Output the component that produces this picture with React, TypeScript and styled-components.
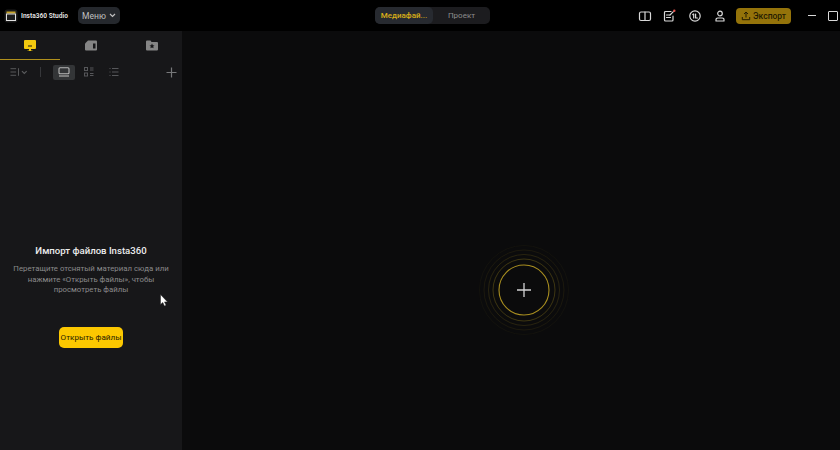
import React from "react";
import styled, { createGlobalStyle } from "styled-components";

const GlobalStyle = createGlobalStyle`
    html, body {
        margin: 0;
        padding: 0;
        background: #0b0b0c;
    }
    #root {
        width: 840px;
        height: 450px;
        overflow: hidden;
    }
`;

const Page = styled.div`
    position: relative;
    width: 840px;
    height: 450px;
    display: flex;
    flex-direction: column;
    overflow: hidden;
    font-family: Roboto, "Noto Sans", sans-serif;
    background: #0b0b0c;
`;

const TitleBar = styled.header`
    height: 31px;
    flex-shrink: 0;
    background: #000;
    display: grid;
    grid-template-columns: 375px auto 1fr;
    align-items: center;
`;

const TitleLeft = styled.div`
    display: flex;
    align-items: center;
    padding-left: 4px;
`;

const AppName = styled.span`
    width: 47px;
    margin-left: 3px;
    font-size: 6.6px;
    font-weight: 700;
    color: #dedede;
    white-space: nowrap;
`;

const MenuButton = styled.div`
    margin-left: 10px;
    width: 42px;
    height: 17px;
    border-radius: 5px;
    background: #25282d;
    color: #c0c0c0;
    font-size: 8.5px;
    display: flex;
    align-items: center;
    justify-content: center;
    gap: 3px;
`;

const ModeSwitch = styled.div`
    width: 115px;
    height: 17px;
    border-radius: 5px;
    background: #1c1c1f;
    display: flex;
`;

const ModeTab = styled.div<{ $active?: boolean }>`
    width: ${({ $active }) => ($active ? "58px" : "57px")};
    border-radius: 5px;
    background: ${({ $active }) => ($active ? "#272a30" : "transparent")};
    color: ${({ $active }) => ($active ? "#d9ae18" : "#8d8d8d")};
    font-size: 8px;
    font-weight: ${({ $active }) => ($active ? 500 : 400)};
    display: flex;
    align-items: center;
    justify-content: center;
`;

const TitleRight = styled.div`
    display: flex;
    align-items: center;
    justify-content: flex-end;
`;

const ToolIcon = styled.div<{ $gap: number }>`
    width: 14px;
    height: 14px;
    margin-right: ${({ $gap }) => $gap}px;
    display: flex;
    color: #d8d8d8;
`;

const ExportButton = styled.div`
    width: 55px;
    height: 16px;
    margin-right: 17px;
    border-radius: 4px;
    background: #94730a;
    color: #241c02;
    font-size: 8.5px;
    font-weight: 500;
    display: flex;
    align-items: center;
    justify-content: center;
    gap: 2px;
`;

const WindowButtons = styled.div`
    width: 32px;
    display: flex;
    align-items: center;
    gap: 12px;
`;

const MinimizeLine = styled.span`
    width: 8px;
    height: 1px;
    background: #d8d8d8;
`;

const MaximizeBox = styled.span`
    width: 8px;
    height: 8px;
    border: 1px solid #d8d8d8;
    border-radius: 1px;
`;

const Body = styled.div`
    flex: 1;
    display: flex;
    min-height: 0;
`;

const Sidebar = styled.aside`
    width: 182px;
    flex-shrink: 0;
    background: #171719;
    display: flex;
    flex-direction: column;
`;

const SideTabs = styled.nav`
    height: 29px;
    display: grid;
    grid-template-columns: 60px 61px 61px;
`;

const SideTab = styled.div<{ $active?: boolean }>`
    display: flex;
    align-items: center;
    justify-content: center;
    border-bottom: 1px solid ${({ $active }) => ($active ? "#b0901c" : "transparent")};
    color: ${({ $active }) => ($active ? "#f2c90f" : "#858585")};
`;

const ViewBar = styled.div`
    height: 24px;
    padding: 0 5px 0 10px;
    display: flex;
    align-items: center;
    color: #5b5c5e;
`;

const SortControl = styled.div`
    width: 18px;
    display: flex;
    align-items: center;
    gap: 1px;
`;

const ViewDivider = styled.span`
    width: 1px;
    height: 10px;
    margin: 0 12px 0 12px;
    background: #36373a;
`;

const ViewOption = styled.div<{ $active?: boolean }>`
    width: 22px;
    height: 15px;
    margin-right: 3px;
    border-radius: 2px;
    background: ${({ $active }) => ($active ? "#333537" : "transparent")};
    color: ${({ $active }) => ($active ? "#b9b9b9" : "#56575a")};
    display: flex;
    align-items: center;
    justify-content: center;
`;

const AddClip = styled.div`
    margin-left: auto;
    display: flex;
    color: #77787a;
`;

const EmptyState = styled.section`
    flex: 1;
    padding: 160px 10px 0;
    display: flex;
    flex-direction: column;
    align-items: center;
    text-align: center;
`;

const EmptyTitle = styled.h2`
    margin: 0;
    font-size: 9.6px;
    line-height: 14px;
    font-weight: 500;
    color: #ededed;
`;

const EmptyText = styled.p`
    margin: 6px 0 0;
    font-size: 7.8px;
    line-height: 10.6px;
    color: #8a8a8b;
    white-space: nowrap;
`;

const OpenButton = styled.div`
    margin-top: 31px;
    width: 64px;
    height: 21px;
    border-radius: 5px;
    background: #fcc800;
    color: #2a2200;
    font-size: 8.1px;
    white-space: nowrap;
    display: flex;
    align-items: center;
    justify-content: center;
`;

const Workspace = styled.main`
    flex: 1;
    background: #0b0b0c;
    padding: 214px 0 0 297px;
`;

const Target = styled.div`
    width: 90px;
    height: 90px;
    color: #d4d4d4;
`;

const Cursor = styled.svg`
    position: absolute;
    left: 160px;
    top: 294px;
`;

const ICON = {
    fill: "none",
    stroke: "currentColor",
    strokeWidth: 1.2,
    strokeLinecap: "round" as const,
    strokeLinejoin: "round" as const,
};

const Logo = () => (
    <svg width="14" height="14" viewBox="0 0 14 14">
        <rect x="0.5" y="0.5" width="13" height="13" rx="3" fill="#1d1d1d" />
        <rect x="2.5" y="2.5" width="9" height="2" fill="#c8a52a" />
        <rect x="2.5" y="5" width="9" height="6.5" fill="none" stroke="#e0e0e0" />
    </svg>
);

const BookIcon = () => (
    <svg width="14" height="14" viewBox="0 0 14 14" {...ICON}>
        <rect x="1.5" y="3" width="11" height="8.5" rx="1.5" />
        <path d="M7 3v8.5" />
    </svg>
);

const NotesIcon = () => (
    <svg width="14" height="14" viewBox="0 0 14 14" {...ICON} style={{ overflow: "visible" }}>
        <path d="M9 2.5H3.5a1 1 0 0 0-1 1v7.5a1 1 0 0 0 1 1H10a1 1 0 0 0 1-1V7" />
        <path d="M4.5 6h3M4.5 8.5h4" />
        <path d="M8 6l3.4-3.4" />
        <circle cx="12.3" cy="1.8" r="1.2" fill="#e5504c" stroke="none" />
    </svg>
);

const BadgeIcon = () => (
    <svg width="14" height="14" viewBox="0 0 14 14" {...ICON}>
        <circle cx="7" cy="7" r="5.2" />
        <path d="M4.8 5.6l.9-.6v4" />
        <path d="M7.6 5v4h1.8" />
    </svg>
);

const UserIcon = () => (
    <svg width="14" height="14" viewBox="0 0 14 14" {...ICON}>
        <circle cx="7" cy="4.5" r="2.3" />
        <path d="M3 12v-1.3a1.7 1.7 0 0 1 1.7-1.7h4.6a1.7 1.7 0 0 1 1.7 1.7V12z" />
    </svg>
);

const UploadIcon = () => (
    <svg width="10" height="10" viewBox="0 0 10 10" fill="none" stroke="#241c02" strokeWidth="1">
        <path d="M5 6.5V1.2M3 3l2-2 2 2M1.3 6v2.7h7.4V6" />
    </svg>
);

const Chevron = () => (
    <svg width="7" height="5" viewBox="0 0 7 5" fill="none" stroke="currentColor" strokeWidth="1.2">
        <path d="M1 1l2.5 2.5L6 1" />
    </svg>
);

const MonitorIcon = () => (
    <svg width="14" height="13" viewBox="0 0 14 13" fill="currentColor">
        <path d="M2 1h10a1 1 0 0 1 1 1v7a1 1 0 0 1-1 1H8v1.5h1.5V12h-5v-.5H6V10H2a1 1 0 0 1-1-1V2a1 1 0 0 1 1-1z" />
        <rect x="5" y="6.5" width="4" height="1" fill="#171719" />
    </svg>
);

const CardIcon = () => (
    <svg width="14" height="13" viewBox="0 0 14 13" fill="currentColor">
        <path d="M4 1.5h8a1 1 0 0 1 1 1v8a1 1 0 0 1-1 1H2a1 1 0 0 1-1-1V4.5z" />
        <rect x="9" y="4.5" width="2.5" height="5" fill="#171719" />
    </svg>
);

const StarFolderIcon = () => (
    <svg width="14" height="13" viewBox="0 0 14 13" fill="currentColor">
        <path d="M1 2.5a1 1 0 0 1 1-1h3.5l1 1.5H12a1 1 0 0 1 1 1v6.5a1 1 0 0 1-1 1H2a1 1 0 0 1-1-1z" />
        <path
            d="M7 4.6l.8 1.6 1.7.2-1.3 1.2.4 1.7L7 8.4l-1.6.9.4-1.7-1.3-1.2 1.7-.2z"
            fill="#171719"
        />
    </svg>
);

const SortIcon = () => (
    <svg width="11" height="10" viewBox="0 0 11 10" fill="none" stroke="currentColor" strokeWidth="1">
        <path d="M0.5 1.5h6M0.5 5h6M0.5 8.5h6M9 1v8" />
    </svg>
);

const FilmstripIcon = () => (
    <svg width="12" height="10" viewBox="0 0 12 10" fill="none" stroke="currentColor" strokeWidth="1.1">
        <rect x="1" y="0.8" width="10" height="6" rx="1" />
        <path d="M1 9h10" />
    </svg>
);

const GridIcon = () => (
    <svg width="10" height="10" viewBox="0 0 10 10" fill="none" stroke="currentColor" strokeWidth="1">
        <rect x="0.5" y="0.5" width="3" height="3" />
        <rect x="0.5" y="6" width="3" height="3" />
        <path d="M6 1h3.5M6 3h3.5M6 6.5h3.5M6 8.5h3.5" />
    </svg>
);

const ListIcon = () => (
    <svg width="10" height="10" viewBox="0 0 10 10" fill="none" stroke="currentColor" strokeWidth="1">
        <path d="M0.5 1.5h1M3 1.5h6.5M0.5 5h1M3 5h6.5M0.5 8.5h1M3 8.5h6.5" />
    </svg>
);

const PlusIcon = () => (
    <svg width="11" height="11" viewBox="0 0 11 11" fill="none" stroke="currentColor" strokeWidth="1.2">
        <path d="M5.5 0.5v10M0.5 5.5h10" />
    </svg>
);

const RINGS = [
    { r: 44.5, opacity: 0.05 },
    { r: 40, opacity: 0.1 },
    { r: 35.5, opacity: 0.18 },
    { r: 31, opacity: 0.3 },
];

const ImportTarget = () => (
    <svg width="90" height="90" viewBox="0 0 90 90" fill="none">
        {RINGS.map(({ r, opacity }) => (
            <circle key={r} cx="45" cy="45" r={r} stroke="#b4981f" strokeOpacity={opacity} />
        ))}
        <circle cx="45" cy="45" r="25" stroke="#a88e20" strokeWidth="1.1" />
        <path d="M45 38v14M38 45h14" stroke="currentColor" strokeWidth="1.3" />
    </svg>
);

export default function App() {
    return (
        <Page>
            <GlobalStyle />
            <TitleBar>
                <TitleLeft>
                    <Logo />
                    <AppName>Insta360 Studio</AppName>
                    <MenuButton>
                        Меню
                        <Chevron />
                    </MenuButton>
                </TitleLeft>
                <ModeSwitch>
                    <ModeTab $active>Медиафай...</ModeTab>
                    <ModeTab>Проект</ModeTab>
                </ModeSwitch>
                <TitleRight>
                    <ToolIcon $gap={10}>
                        <BookIcon />
                    </ToolIcon>
                    <ToolIcon $gap={12}>
                        <NotesIcon />
                    </ToolIcon>
                    <ToolIcon $gap={11}>
                        <BadgeIcon />
                    </ToolIcon>
                    <ToolIcon $gap={9}>
                        <UserIcon />
                    </ToolIcon>
                    <ExportButton>
                        <UploadIcon />
                        Экспорт
                    </ExportButton>
                    <WindowButtons>
                        <MinimizeLine />
                        <MaximizeBox />
                    </WindowButtons>
                </TitleRight>
            </TitleBar>
            <Body>
                <Sidebar>
                    <SideTabs>
                        <SideTab $active>
                            <MonitorIcon />
                        </SideTab>
                        <SideTab>
                            <CardIcon />
                        </SideTab>
                        <SideTab>
                            <StarFolderIcon />
                        </SideTab>
                    </SideTabs>
                    <ViewBar>
                        <SortControl>
                            <SortIcon />
                            <Chevron />
                        </SortControl>
                        <ViewDivider />
                        <ViewOption $active>
                            <FilmstripIcon />
                        </ViewOption>
                        <ViewOption>
                            <GridIcon />
                        </ViewOption>
                        <ViewOption>
                            <ListIcon />
                        </ViewOption>
                        <AddClip>
                            <PlusIcon />
                        </AddClip>
                    </ViewBar>
                    <EmptyState>
                        <EmptyTitle>Импорт файлов Insta360</EmptyTitle>
                        <EmptyText>
                            Перетащите отснятый материал сюда или
                            <br />
                            нажмите «Открыть файлы», чтобы
                            <br />
                            просмотреть файлы
                        </EmptyText>
                        <OpenButton>Открыть файлы</OpenButton>
                    </EmptyState>
                </Sidebar>
                <Workspace>
                    <Target>
                        <ImportTarget />
                    </Target>
                </Workspace>
            </Body>
            <Cursor width="9" height="13" viewBox="0 0 9 13">
                <path d="M0.5 0.5v10l2.3-2 1.6 3.6 1.7-.8-1.6-3.4h3z" fill="#fff" stroke="#222" strokeWidth="0.5" />
            </Cursor>
        </Page>
    );
}
